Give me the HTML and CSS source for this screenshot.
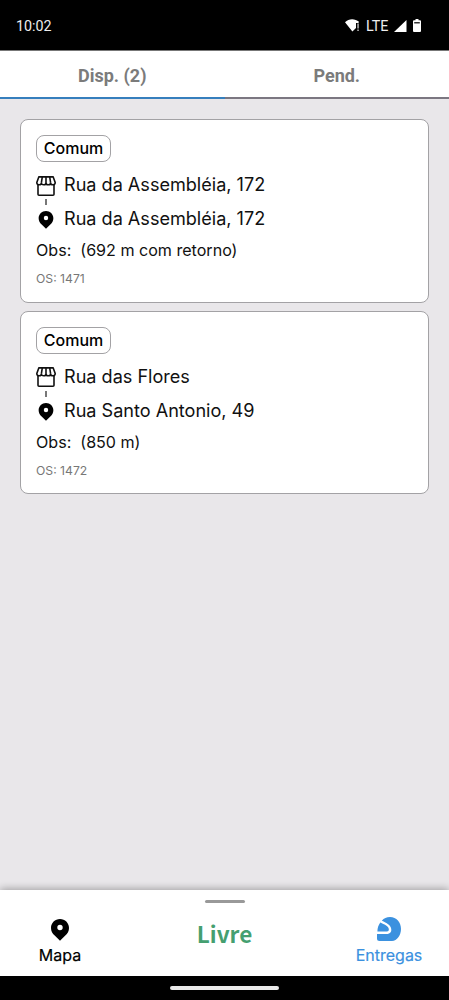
FILE: index.html
```
<!DOCTYPE html>
<html lang="pt-BR">
<head>
<meta charset="utf-8">
<meta name="viewport" content="width=device-width">
<title>Entregas</title>
<link rel="stylesheet" href="styles.css">
</head>
<body>
<svg width="0" height="0" class="sprite">
  <symbol id="store" viewBox="0 0 20 20">
    <g fill="none" stroke="currentColor" stroke-width="1.6" stroke-linejoin="round">
      <path d="M2 8.500v9.700q0 1 1 1h14q1 0 1-1V8.500"/>
      <path d="M2.800.9h14.400L19.200 6.500q0 2.300-2.300 2.300T14.600 6.700q0 2.100-2.300 2.100T10 6.700q0 2.100-2.300 2.100T5.400 6.700q0 2.100-2.300 2.100T.8 6.500zM6.300.9 5.400 6.700M10 .9v5.800M13.700.9l.9 5.800"/>
    </g>
  </symbol>
  <symbol id="pin" viewBox="0 0 18 22">
    <path fill="currentColor" fill-rule="evenodd" d="M9 0C4 0 0 3.900 0 8.900c0 3 1.400 5.700 3.700 7.700L9 21.800l5.300-5.200C16.600 14.600 18 11.900 18 8.900 18 3.900 14 0 9 0zm0 5.800a2.700 2.700 0 1 1 0 5.400 2.700 2.700 0 0 1 0-5.400z"/>
  </symbol>
</svg>
<header class="status">
  <span class="clock">10:02</span>
  <div class="signals">
    <svg class="wifi" viewBox="0 0 15 13"><path fill="#fff" d="M0 3.200C3.800-.7 10-.7 14 2.800L13.400 4H11v5l-3.600 3.600z"/><path fill="#bbb" d="M12.300 4.500h1.500v5h-1.500zM12.300 10.600h1.500v1.500h-1.500z"/></svg>
    <span class="lte">LTE</span>
    <svg class="cell" viewBox="0 0 13 12"><path fill="#fff" d="M12.500 0v12H0z"/></svg>
    <svg class="battery" viewBox="0 0 8 13"><path fill="#fff" d="M2.500 0h3v1.200H7q1 0 1 1V12q0 1-1 1H1q-1 0-1-1V2.200q0-1 1-1h1.500z"/><path fill="#333" d="M1.200 3h5.600v1.500H1.200z"/></svg>
  </div>
</header>
<nav class="tabs">
  <div class="tab active">Disp. (2)</div>
  <div class="tab">Pend.</div>
</nav>
<main class="list">
  <article class="card">
    <span class="badge">Comum</span>
    <div class="stop"><svg class="store"><use href="#store"/></svg><span class="street">Rua da Assembléia, 172</span></div>
    <div class="link"></div>
    <div class="stop"><svg class="pin"><use href="#pin"/></svg><span class="street">Rua da Assembléia, 172</span></div>
    <p class="obs"><span>Obs:</span><span>(692 m com retorno)</span></p>
    <p class="os">OS: 1471</p>
  </article>
  <article class="card">
    <span class="badge">Comum</span>
    <div class="stop"><svg class="store"><use href="#store"/></svg><span class="street">Rua das Flores</span></div>
    <div class="link"></div>
    <div class="stop"><svg class="pin"><use href="#pin"/></svg><span class="street">Rua Santo Antonio, 49</span></div>
    <p class="obs"><span>Obs:</span><span>(850 m)</span></p>
    <p class="os">OS: 1472</p>
  </article>
</main>
<footer class="bottom">
  <div class="item"><svg class="map-icon"><use href="#pin"/></svg><span>Mapa</span></div>
  <div class="center"><i class="handle"></i><strong>Livre</strong></div>
  <div class="item selected">
    <svg class="helmet" viewBox="0 0 24 24"><path fill="currentColor" d="M13 0C19.500 0 24 5 24 12c0 6-4 12-9 12H2.500Q0 24 0 21.500V17h9.500c4 0 5.500-2.500 4.500-6C13.300 8 10 6 4.800 3.700 7 1.300 9.500 0 13 0z"/><path fill="currentColor" d="M3.300 5.500C7.500 7.500 11 9 11.700 11.500c.5 1.900-.2 3-2 3H.4C.4 11 1.500 7.800 3.300 5.500z"/></svg>
    <span>Entregas</span>
  </div>
</footer>
<div class="gesture"><i></i></div>
</body>
</html>
```

FILE: styles.css
```
* { box-sizing: border-box; }
body {
  margin: 0;
  height: 1000px;
  display: flex;
  flex-direction: column;
  background: #e9e7ea;
  color: #111;
  font-family: Inter, sans-serif;
  overflow: hidden;
}
svg { display: block; flex: none; }
.sprite { position: absolute; }
.status {
  flex: none;
  height: 51px;
  padding: 1px 28px 0 16px;
  background: #000;
  color: #eee;
  display: flex;
  align-items: center;
  justify-content: space-between;
  font: 14.3px/20px Roboto, sans-serif;
  border-bottom: 1px solid #777;
}
.signals { display: flex; align-items: center; }
.wifi { width: 15px; height: 13px; }
.lte { margin-left: 6px; width: 24px; }
.cell { width: 13px; height: 12px; margin-left: 4px; }
.battery { width: 8px; height: 13px; margin-left: 6px; }
.tabs {
  flex: none;
  height: 48px;
  display: flex;
  background: #fff;
  color: #7b7b7b;
  font: 700 18px/50px Roboto, sans-serif;
  text-align: center;
}
.tab { flex: 1 1 0; min-width: 0; border-bottom: 2px solid #7b7781; }
.active { border-color: #367fbd; }
.list { flex: 1; padding: 20px 20px 0; }
.card {
  height: 183.500px;
  margin-bottom: 8px;
  padding: 15px;
  border: 1px solid #a3a2a5;
  border-radius: 8px;
  background: #fff;
}
.card + .card { height: 183px; }
.badge {
  display: block;
  width: 75px;
  height: 27px;
  border: 1px solid #a3a2a5;
  border-radius: 8px;
  font-size: 16px;
  font-weight: 500;
  line-height: 25px;
  text-align: center;
  color: #000;
}
.stop { display: flex; align-items: center; height: 22px; }
.badge + .stop { margin-top: 11px; }
.store { width: 20px; height: 20px; margin-top: 3px; }
.pin { width: 16px; height: 18px; margin: 4px 2px 0; color: #000; }
.street { margin-left: 8px; font-size: 18.080px; line-height: 22px; }
.link { width: 2px; height: 6px; margin: 4px 0 2px 9px; background: #777; }
.obs { display: flex; gap: 9px; margin: 11px 0 0; font-size: 16.080px; line-height: 20px; }
.os { margin: 10px 0 0; font-size: 12.200px; line-height: 17px; color: #777; }
.bottom {
  flex: none;
  height: 86px;
  display: grid;
  grid-template-columns: 120px 1fr 120px;
  background: #fff;
  box-shadow: 0 -1px 8px #0005;
}
.item { display: flex; flex-direction: column; align-items: center; font-size: 16px; line-height: 20px; color: #000; }
.item span { margin-top: 4px; -webkit-text-stroke: .2px currentColor; }
.map-icon { width: 18px; height: 22px; margin-top: 29px; }
.item.selected { color: #3b91df; }
.helmet { width: 24px; height: 24px; margin-top: 27px; }
.center { display: flex; flex-direction: column; align-items: center; }
.handle { width: 40px; height: 3px; margin-top: 10px; border-radius: 2px; background: #999; }
.center strong { margin-top: 13px; color: #459f70; font: 700 22.500px/34px "Noto Sans CJK SC", sans-serif; }
.gesture { flex: none; height: 24px; background: #000; display: flex; justify-content: center; z-index: 1; }
.gesture i { width: 109px; height: 4px; margin-top: 10px; border-radius: 2px; background: #e9e9e9; }
```
